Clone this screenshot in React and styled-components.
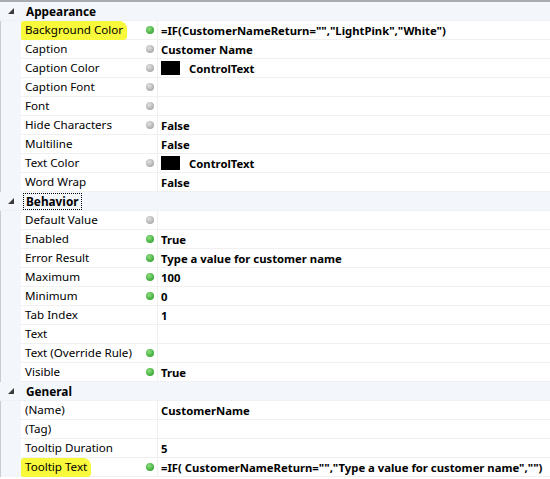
import React from "react";
import styled, { createGlobalStyle, css } from "styled-components";

const Global = createGlobalStyle`
  html, body { margin: 0; padding: 0; background: #fff; }
  body { font-family: "Segoe UI", "Noto Sans", "Open Sans", sans-serif; font-size: 11.6px; color: #000; }
`;

const Grid = styled.div`
  width: 550px;
  height: 479px;
  overflow: hidden;
  border-top: 2px solid #a9acb1;
  box-sizing: border-box;
  background: #fff;
  display: flex;
  flex-direction: column;
`;

const CategoryRow = styled.div`
  display: flex;
  align-items: center;
  height: 19px;
  flex: none;
  background: #f3f6fb;
  border-bottom: 1px solid #eef1f5;
  box-sizing: border-box;
`;

const Arrow = styled.div`
  width: 21px;
  display: flex;
  justify-content: center;
  align-items: center;
  padding-left: 2px;
  box-sizing: border-box;
`;

const CatLabel = styled.span`
  font-weight: bold;
  font-size: 11.8px;
  padding: 0 2px;
  margin-left: 2px;
  line-height: 15px;
  border: 1px dotted ${(p) => (p.$focus ? "#000" : "transparent")};
`;

const Row = styled.div`
  display: flex;
  height: 19px;
  flex: none;
`;

const Gutter = styled.div`
  width: 21px;
  flex: none;
  background: #f3f6fb;
  border-left: 1px solid #c9ccd1;
  box-sizing: border-box;
`;

const NameCell = styled.div`
  width: 136px;
  flex: none;
  display: flex;
  align-items: center;
  justify-content: space-between;
  padding-left: 4px;
  padding-right: 3px;
  box-sizing: border-box;
  border-bottom: 1px solid #f0f0f0;
`;

const Label = styled.span`
  white-space: nowrap;
  line-height: 16px;
  ${(p) =>
    p.$mark &&
    css`
      background: #f8f93a;
      margin-left: -4px;
      padding: 1px 4px 1px 4px;
      border-radius: 3px 8px 4px 2px;
      box-shadow: 0 1px 0 #f8f93a;
    `}
`;

const Dot = styled.span`
  width: 8px;
  height: 8px;
  border-radius: 50%;
  flex: none;
  background: ${(p) =>
    p.$kind === "green"
      ? "radial-gradient(circle at 40% 35%, #8ee07e, #3ea93a 70%)"
      : "radial-gradient(circle at 40% 35%, #e2e2e2, #a9a9a9 75%)"};
  visibility: ${(p) => (p.$kind ? "visible" : "hidden")};
`;

const ValueCell = styled.div`
  flex: 1;
  display: flex;
  align-items: center;
  gap: 9px;
  padding-left: 3px;
  border-left: 1px solid #f0f0f0;
  border-bottom: 1px solid #f0f0f0;
  font-weight: bold;
  font-size: 11.3px;
  white-space: nowrap;
  box-sizing: border-box;
`;

const Swatch = styled.span`
  width: 19px;
  height: 14px;
  background: #000;
  flex: none;
`;

const data = [
  {
    cat: "Appearance",
    rows: [
      { n: "Background Color", d: "green", v: '=IF(CustomerNameReturn="","LightPink","White")', mark: true },
      { n: "Caption", d: "grey", v: "Customer Name" },
      { n: "Caption Color", d: "grey", v: "ControlText", swatch: true },
      { n: "Caption Font", d: "grey", v: "" },
      { n: "Font", d: "grey", v: "" },
      { n: "Hide Characters", d: "grey", v: "False" },
      { n: "Multiline", d: null, v: "False" },
      { n: "Text Color", d: "grey", v: "ControlText", swatch: true },
      { n: "Word Wrap", d: null, v: "False" },
    ],
  },
  {
    cat: "Behavior",
    focus: true,
    rows: [
      { n: "Default Value", d: "grey", v: "" },
      { n: "Enabled", d: "green", v: "True" },
      { n: "Error Result", d: "green", v: "Type a value for customer name" },
      { n: "Maximum", d: "green", v: "100" },
      { n: "Minimum", d: "green", v: "0" },
      { n: "Tab Index", d: null, v: "1" },
      { n: "Text", d: null, v: "" },
      { n: "Text (Override Rule)", d: "green", v: "" },
      { n: "Visible", d: "green", v: "True" },
    ],
  },
  {
    cat: "General",
    rows: [
      { n: "(Name)", d: null, v: "CustomerName" },
      { n: "(Tag)", d: null, v: "" },
      { n: "Tooltip Duration", d: null, v: "5" },
      { n: "Tooltip Text", d: "green", v: '=IF( CustomerNameReturn="","Type a value for customer name","")', mark: true },
    ],
  },
];

const Tri = () => (
  <svg width="7" height="7" viewBox="0 0 7 7">
    <polygon points="6,0 6,6 0,6" fill="#3c3c3c" />
  </svg>
);

export default function App() {
  return (
    <>
      <Global />
      <Grid>
        {data.map((g) => (
          <React.Fragment key={g.cat}>
            <CategoryRow>
              <Arrow>
                <Tri />
              </Arrow>
              <CatLabel $focus={g.focus}>{g.cat}</CatLabel>
            </CategoryRow>
            {g.rows.map((r) => (
              <Row key={r.n}>
                <Gutter />
                <NameCell>
                  <Label $mark={r.mark}>{r.n}</Label>
                  <Dot $kind={r.d} />
                </NameCell>
                <ValueCell>
                  {r.swatch && <Swatch />}
                  {r.v && <span>{r.v}</span>}
                </ValueCell>
              </Row>
            ))}
          </React.Fragment>
        ))}
      </Grid>
    </>
  );
}
